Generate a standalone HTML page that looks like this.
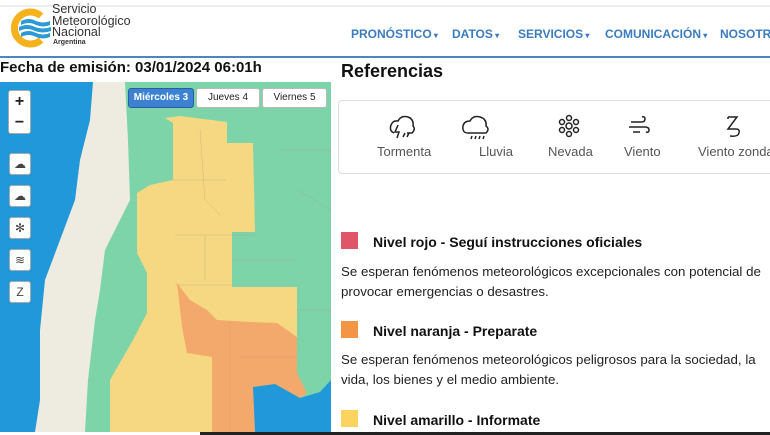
<!DOCTYPE html>
<html><head><meta charset="utf-8"><style>
*{margin:0;padding:0;box-sizing:border-box}
body{width:770px;height:435px;overflow:hidden;background:#fff;font-family:"Liberation Sans",sans-serif;position:relative}
.a{position:absolute;white-space:nowrap}
.nav{color:#3a7cc0;font-weight:bold;font-size:12px;top:27px}
.nav:after{content:" ▾";font-size:8px}
.btn{position:absolute;background:#fff;border:1px solid #bbb;border-radius:3px;font-size:10px;text-align:center;line-height:18px;color:#222}
.ib{position:absolute;left:9px;width:22px;height:22px;background:#fff;border:1px solid #aaa;border-radius:3px;font-size:12px;line-height:20px;text-align:center;color:#444}
.lab{font-size:13px;color:#555;top:144px}
.sq{position:absolute;left:341px;width:17px;height:17px}
.t{left:373px;font-weight:bold;font-size:14px;color:#111}
.d{left:341px;font-size:13.3px;color:#222}
</style></head><body>
<div class="a" style="left:0;top:5px;width:770px;height:2px;background:#eee"></div>
<svg class="a" style="left:5px;top:7px" width="48" height="42" viewBox="0 0 48 42">
<path d="M36 9 A16 16 0 1 0 36 33" fill="none" stroke="#f5b21c" stroke-width="7"/>
<path d="M16 14 q8-4 15 0 q7 3 14 0 v4 q-7 3-14 0 q-7-4-15 0z" fill="#2b9bd6"/>
<path d="M14 20 q8-4 16 0 q8 3 16 0 v4 q-8 3-16 0 q-8-4-16 0z" fill="#2b9bd6"/>
<path d="M16 26 q8-4 15 0 q7 3 14 0 v4 q-7 3-14 0 q-7-4-15 0z" fill="#2b9bd6"/>
</svg>
<div class="a" style="left:52px;top:4px;font-size:12.5px;line-height:11.5px;color:#333">Servicio<br>Meteorológico<br>Nacional</div>
<div class="a" style="left:53px;top:39px;font-size:7px;font-weight:bold;color:#333">Argentina</div>
<div class="a nav" style="left:351px">PRONÓSTICO</div>
<div class="a nav" style="left:452px">DATOS</div>
<div class="a nav" style="left:518px">SERVICIOS</div>
<div class="a nav" style="left:605px">COMUNICACIÓN</div>
<div class="a" style="left:720px;top:27px;color:#3a7cc0;font-weight:bold;font-size:12px">NOSOTROS</div>
<div class="a" style="left:0;top:56px;width:770px;height:2px;background:#4a86c4"></div>
<div class="a" style="left:0;top:59px;font-size:15px;font-weight:600;color:#111">Fecha de emisión: 03/01/2024 06:01h</div>
<div class="a" style="left:341px;top:61px;font-size:18px;font-weight:bold;color:#111">Referencias</div>

<svg class="a" style="left:0;top:82px" width="331" height="350" viewBox="0 82 331 350">
<rect x="0" y="82" width="331" height="350" fill="#7dd4a9"/>
<polygon points="0,82 125,82 128,140 130,200 115,230 105,250 100,290 95,320 88,380 85,432 0,432" fill="#eeebe1"/>
<polygon points="0,82 93,82 90,120 80,160 75,200 60,240 45,280 40,330 40,400 35,432 0,432" fill="#2198da"/>
<polygon points="165,118 180,116 227,122 227,143 253,143 255,232 232,232 232,287 297,287 297,380 307,393 300,398 280,388 257,387 250,432 110,432 110,380 133,340 147,313 147,273 137,253 137,193 150,185 173,180 173,123" fill="#f7d882"/>
<polygon points="177,283 190,300 207,310 217,320 250,322 277,323 297,337 297,373 307,393 300,398 280,388 257,387 257,432 212,432 212,357 187,353 182,327" fill="#f3a96b"/>
<polygon points="253,387 275,384 300,398 320,392 331,380 331,432 255,432" fill="#2198da"/>
<g stroke="#a9a084" stroke-width="0.5" fill="none" opacity="0.6">
<path d="M173,180 L226,180 M200,130 L205,200 L220,215 M175,235 L255,235 M205,235 L205,280 M232,260 L297,260 M175,285 L232,285 M230,322 L230,432 M240,357 L297,357 M297,310 L331,310 M280,150 L331,150 M297,190 L331,210"/>
</g>
</svg>
<div class="a" style="left:200px;top:432px;width:570px;height:3px;background:#222"></div>
<div class="btn" style="left:128px;top:88px;width:66px;height:20px;background:#3d82d2;color:#fff;font-weight:bold;border-color:#2a5f9e">Miércoles 3</div>
<div class="btn" style="left:196px;top:88px;width:64px;height:20px">Jueves 4</div>
<div class="btn" style="left:262px;top:88px;width:65px;height:20px">Viernes 5</div>
<div class="a" style="left:8px;top:90px;width:23px;height:44px;background:#fff;border:1px solid #aaa;border-radius:3px;font-size:16px;font-weight:bold;text-align:center;line-height:21px;color:#222">+<br>−</div>
<div class="ib" style="top:153px">☁</div><div class="ib" style="top:185px">☁</div><div class="ib" style="top:217px">✻</div><div class="ib" style="top:249px">≋</div><div class="ib" style="top:281px">Z</div>

<div class="a" style="left:338px;top:100px;width:440px;height:74px;border:1px solid #ddd;border-radius:4px"></div>
<svg class="a" style="left:388px;top:113px" width="360" height="28" viewBox="0 0 360 28" fill="none" stroke="#222" stroke-width="1.5">
<path d="M6 20 q-5-2-3-8 q2-5 7-4 q3-6 10-4 q6 2 5 9 q3 3-1 7 h-5 M10 12 l-3 7 h4 l-2 6 M17 20 l-2 4 M21 20 l-2 4"/>
<path d="M80 20 q-6 0-5-7 q1-5 7-5 q3-6 10-4 q7 2 6 9 q4 3 0 7z M84 23 l-1 3 M88 23 l-1 3 M92 23 l-1 3 M96 23 l-1 3"/>
<circle cx="181" cy="13" r="3"/><circle cx="181" cy="5" r="2.5"/><circle cx="181" cy="21" r="2.5"/><circle cx="174" cy="9" r="2.5"/><circle cx="188" cy="9" r="2.5"/><circle cx="174" cy="17" r="2.5"/><circle cx="188" cy="17" r="2.5"/>
<path d="M243 9 h10 q4 0 4-3 q0-3-3-2 M241 14 h16 q4 0 4 3 q0 3-3 2 M245 19 h7"/>
<path d="M340 4 h9 l-9 12 h8 q4 0 3 4 q-1 4-9 3 M340 4 v2"/>
</svg>
<div class="a lab" style="left:377px">Tormenta</div>
<div class="a lab" style="left:479px">Lluvia</div>
<div class="a lab" style="left:548px">Nevada</div>
<div class="a lab" style="left:624px">Viento</div>
<div class="a lab" style="left:698px">Viento zonda</div>

<div class="sq" style="top:232px;background:#e05567"></div>
<div class="a t" style="top:234px">Nivel rojo - Seguí instrucciones oficiales</div>
<div class="a d" style="top:262px;line-height:19.5px">Se esperan fenómenos meteorológicos excepcionales con potencial de<br>provocar emergencias o desastres.</div>
<div class="sq" style="top:321px;background:#f39545"></div>
<div class="a t" style="top:323px">Nivel naranja - Preparate</div>
<div class="a d" style="top:350px;line-height:19.5px">Se esperan fenómenos meteorológicos peligrosos para la sociedad, la<br>vida, los bienes y el medio ambiente.</div>
<div class="sq" style="top:410px;background:#fcd35f"></div>
<div class="a t" style="top:412px">Nivel amarillo - Informate</div>
</body></html>
